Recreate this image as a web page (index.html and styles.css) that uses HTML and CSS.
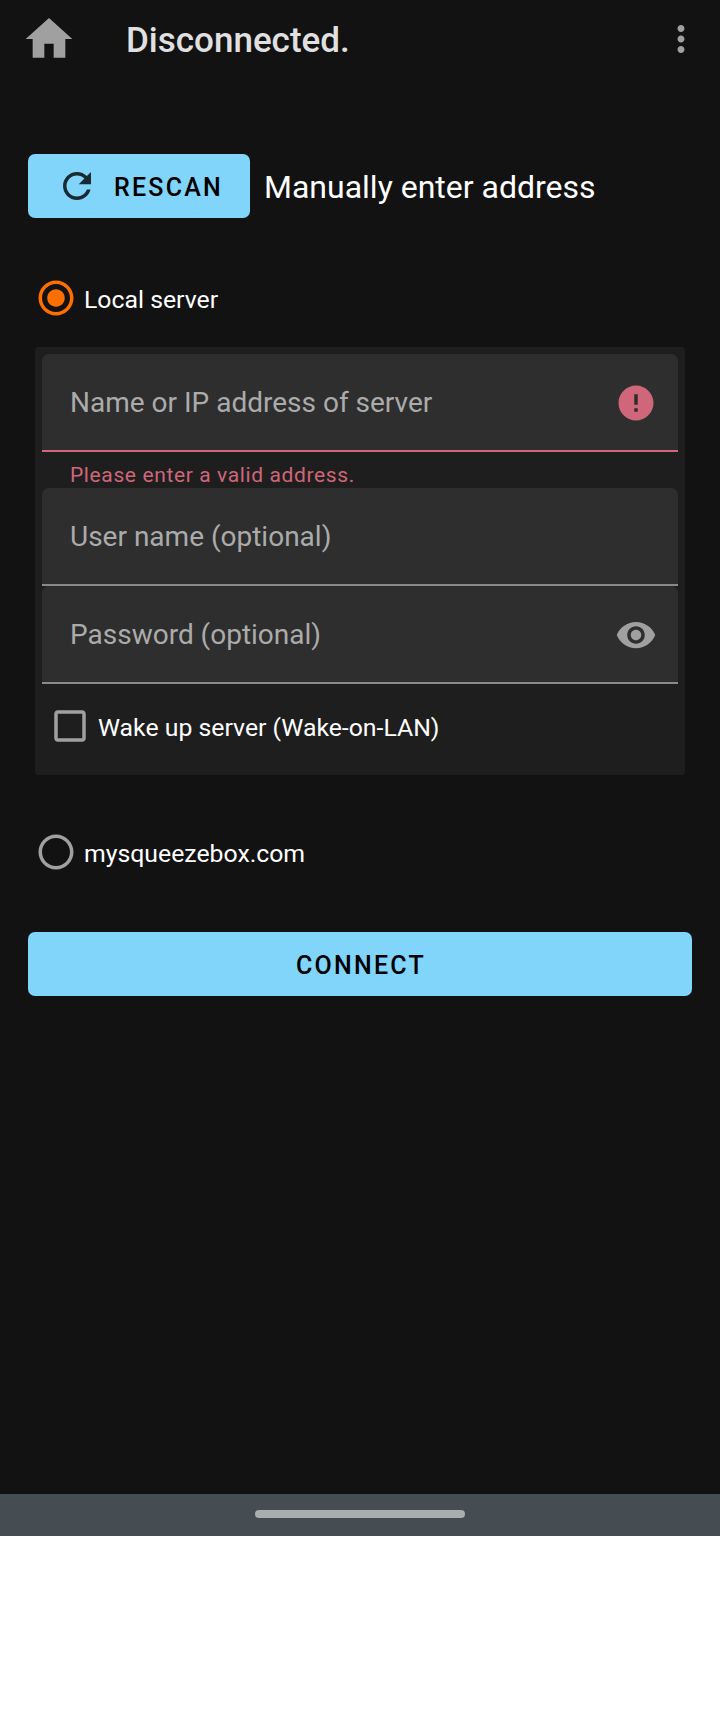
FILE: index.html
```html
<!DOCTYPE html>
<html lang="en">
<head>
<meta charset="utf-8">
<title>Disconnected</title>
<link rel="stylesheet" href="styles.css">
</head>
<body>
<main class="screen">
  <header class="app-bar">
    <svg class="home" viewBox="0 0 24 24"><path d="M10 20v-6h4v6h5v-8h3L12 3 2 12h3v8z"/></svg>
    <h1 class="title">Disconnected.</h1>
    <svg class="icon more" viewBox="0 0 24 24"><path d="M12 8c1.1 0 2-.9 2-2s-.9-2-2-2-2 .9-2 2 .9 2 2 2zm0 2c-1.1 0-2 .9-2 2s.9 2 2 2 2-.9 2-2-.9-2-2-2zm0 6c-1.100 0-2 .9-2 2s.9 2 2 2 2-.9 2-2-.9-2-2-2z"/></svg>
  </header>
  <section class="scan">
    <button class="button rescan">
      <svg class="icon refresh" viewBox="0 0 24 24"><path d="M17.650 6.350C16.200 4.900 14.210 4 12 4c-4.420 0-7.990 3.580-7.990 8s3.570 8 7.990 8c3.730 0 6.840-2.550 7.730-6h-2.080c-.820 2.330-3.040 4-5.650 4-3.310 0-6-2.690-6-6s2.690-6 6-6c1.660 0 3.140.690 4.220 1.780L13 11h7V4l-2.350 2.350z"/></svg>
      <span>RESCAN</span>
    </button>
    <span class="scan-text">Manually enter address</span>
  </section>
  <div class="option local">
    <svg class="icon checked" viewBox="0 0 24 24"><path d="M12 7c-2.760 0-5 2.240-5 5s2.240 5 5 5 5-2.240 5-5-2.240-5-5-5zm0-5C6.480 2 2 6.480 2 12s4.480 10 10 10 10-4.480 10-10S17.520 2 12 2zm0 18c-4.420 0-8-3.580-8-8s3.580-8 8-8 8 3.580 8 8-3.580 8-8 8z"/></svg>
    <span>Local server</span>
  </div>
  <section class="card">
    <div class="field invalid">
      <span class="hint">Name or IP address of server</span>
      <svg class="icon" viewBox="0 0 24 24"><path d="M12 2C6.480 2 2 6.480 2 12s4.480 10 10 10 10-4.480 10-10S17.520 2 12 2zm1 15h-2v-2h2v2zm0-4h-2V7h2v6z"/></svg>
    </div>
    <p class="error">Please enter a valid address.</p>
    <div class="field"><span class="hint">User name (optional)</span></div>
    <div class="field">
      <span class="hint">Password (optional)</span>
      <svg class="icon" viewBox="0 0 24 24"><path d="M12 4.500C7 4.500 2.730 7.610 1 12c1.730 4.390 6 7.500 11 7.500s9.270-3.110 11-7.500c-1.730-4.390-6-7.500-11-7.500zM12 17c-2.760 0-5-2.240-5-5s2.240-5 5-5 5 2.240 5 5-2.240 5-5 5zm0-8c-1.660 0-3 1.340-3 3s1.340 3 3 3 3-1.340 3-3-1.340-3-3-3z"/></svg>
    </div>
    <div class="check-row">
      <svg class="icon" viewBox="0 0 24 24"><path d="M19 5v14H5V5h14m0-2H5c-1.100 0-2 .9-2 2v14c0 1.100.9 2 2 2h14c1.100 0 2-.9 2-2V5c0-1.100-.9-2-2-2z"/></svg>
      <span>Wake up server (Wake-on-LAN)</span>
    </div>
  </section>
  <div class="option remote">
    <svg class="icon" viewBox="0 0 24 24"><path d="M12 2C6.480 2 2 6.480 2 12s4.480 10 10 10 10-4.480 10-10S17.520 2 12 2zm0 18c-4.420 0-8-3.580-8-8s3.580-8 8-8 8 3.580 8 8-3.580 8-8 8z"/></svg>
    <span>mysqueezebox.com</span>
  </div>
  <button class="button connect">CONNECT</button>
</main>
<footer class="nav-bar"><div class="handle"></div></footer>
</body>
</html>
```

FILE: styles.css
```css
* { box-sizing: border-box; }
body {
  margin: 0;
  background: #fff;
  color: #fff;
  font-family: Roboto, "Liberation Sans", sans-serif;
  font-size: 24.8px;
}
svg { display: block; flex: none; fill: #a0a0a0; }
.icon { width: 42px; height: 42px; }
.screen {
  display: flex;
  flex-direction: column;
  height: 1494px;
  background: #121212;
}
.app-bar {
  display: flex;
  align-items: center;
  height: 78px;
  padding: 0 18px 0 21px;
}
.home { width: 56px; height: 56px; }
.title {
  flex: 1;
  margin: 2px 0 0 49px;
  color: #e0e0e0;
  font-size: 35px;
  font-weight: 500;
  line-height: 41px;
}
.scan {
  display: flex;
  align-items: center;
  gap: 14px;
  margin: 76px 28px 0;
}
.button {
  display: flex;
  align-items: center;
  height: 64px;
  padding: 0;
  border: 0;
  border-radius: 7px;
  background: #81d4fa;
  color: #000;
  font: 500 25px/29px Roboto, "Liberation Sans", sans-serif;
  letter-spacing: 2.23px;
}
.button span { padding-top: 2px; }
.rescan { width: 222px; padding-left: 28px; gap: 16px; }
.refresh { fill: #1a2a32; }
.scan-text { font-size: 32px; line-height: 37px; padding-top: 2px; }
.option {
  display: flex;
  align-items: center;
  height: 42px;
  padding-left: 35px;
  gap: 7px;
}
.option span { padding-top: 2px; }
.local { margin-top: 59px; }
.checked { fill: #ff6f00; }
.card {
  height: 428px;
  margin: 28px 35px 0;
  padding: 7px;
  border-radius: 4px;
  background: #1e1e1e;
}
.field {
  display: flex;
  align-items: center;
  justify-content: space-between;
  height: 98px;
  padding: 0 21px 0 28px;
  border-radius: 7px 7px 0 0;
  background: linear-gradient(#8a8a8a, #8a8a8a) bottom / 100% 2px no-repeat #2e2e2e;
}
.invalid { background-image: linear-gradient(#cf6679, #cf6679); }
.invalid svg { fill: #cf6679; }
.hint { margin-bottom: 2px; color: #ababab; font-size: 28px; line-height: 33px; }
.error {
  height: 36px;
  margin: 0;
  padding: 11px 28px 0;
  color: #cf6679;
  font-size: 21px;
  line-height: 25px;
  letter-spacing: 0.62px;
}
.check-row {
  display: flex;
  align-items: center;
  height: 84px;
  padding-left: 7px;
  gap: 7px;
}
.check-row span { padding-top: 2px; }
.remote { margin-top: 56px; }
.connect { justify-content: center; margin: 59px 28px 0; padding: 2px 0 0 2px; }
.nav-bar {
  display: flex;
  justify-content: center;
  height: 42px;
  padding-top: 16px;
  background: #454d52;
}
.handle { width: 210px; height: 8px; border-radius: 4px; background: #a9aeb0; }
```
